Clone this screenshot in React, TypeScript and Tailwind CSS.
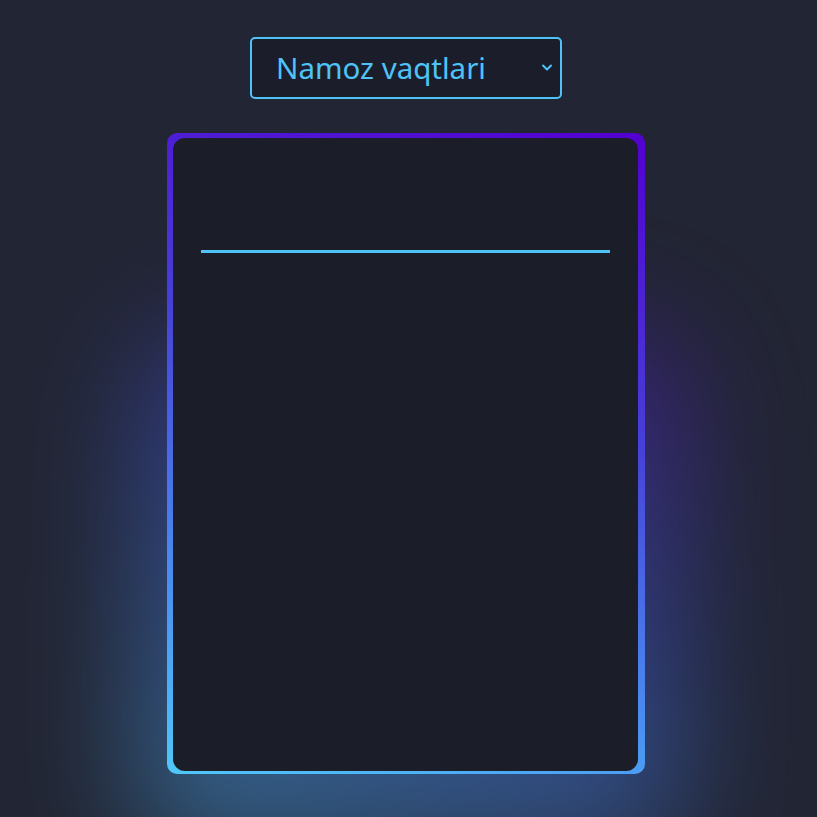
import React from "react";

export default function App() {
  return (
    <div className="min-h-screen w-full bg-[#222533] overflow-hidden" style={{ fontFamily: '"Noto Sans", "Open Sans", sans-serif' }}>
      <div className="flex flex-col items-center pt-[37px] pr-[5px]">
        <div className="relative w-[312px] h-[62px] rounded-[5px] border-2 border-[#4fc3f7] bg-[#1b1e2a] flex items-center pl-[24px]">
          <span className="text-[29.5px] leading-none text-[#4fc3f7]">Namoz vaqtlari</span>
          <svg className="absolute right-[7px] top-[24px]" width="12" height="9" viewBox="0 0 12 9">
            <path d="M2 2.5 L6 6.5 L10 2.5" fill="none" stroke="#4fc3f7" strokeWidth="2" strokeLinecap="round" strokeLinejoin="round" />
          </svg>
        </div>

        <div className="relative mt-[34px] w-[478px] h-[641px]">
          <div className="absolute left-[-30px] right-[-40px] top-[200px] bottom-[-80px] rounded-[60px] bg-[linear-gradient(205deg,#5a10d0_0%,#4060e0_45%,#4fc3f7_100%)] blur-[60px] opacity-45" />
          <div className="relative h-full w-full rounded-[10px] bg-[linear-gradient(197deg,#5200d0_0%,#4740d8_40%,#4a8ef0_75%,#50c8f8_100%)] pt-[5px] pl-[6px] pr-[7px] pb-[3px]">
            <div className="h-full w-full rounded-[12px] bg-[#1b1e29] pt-[112px] px-[28px]">
              <div className="h-[3px] w-full bg-[#4fc3f7]" />
            </div>
          </div>
        </div>
      </div>
    </div>
  );
}
